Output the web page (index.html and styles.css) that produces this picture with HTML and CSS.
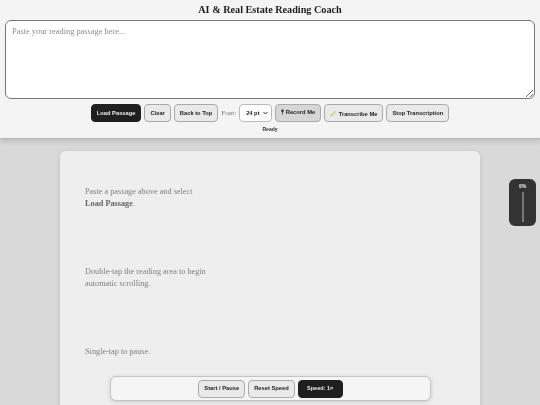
FILE: index.html
```html
<!DOCTYPE html>
<html lang="en">
<head>
<meta charset="utf-8">
<title>AI &amp; Real Estate Reading Coach</title>
<link rel="stylesheet" href="styles.css">
</head>
<body>
<header class="top">
  <h1 class="title">AI &amp; Real Estate Reading Coach</h1>
  <textarea class="passage" placeholder="Paste your reading passage here..."></textarea>
  <div class="toolbar">
    <button class="btn dark">Load Passage</button>
    <button class="btn">Clear</button>
    <button class="btn">Back to Top</button>
    <label class="font-label">Font:</label>
    <select class="font-select"><option>24 pt</option></select>
    <button class="btn pressed"><svg class="mic" viewBox="0 0 6 10" width="3" height="6"><path d="M1 0h4v4.500L3.600 6v4H2.400V6L1 4.500z" fill="#222"/></svg> Record Me</button>
    <button class="btn"><svg class="pencil" viewBox="0 0 10 10" width="7" height="7"><path d="M1 9l1-3 5-5 2 2-5 5z" fill="#e9cf8a"/><path d="M1 9l.5-1.500L2.500 8.500z" fill="#555"/></svg> Transcribe Me</button>
    <button class="btn">Stop Transcription</button>
  </div>
  <div class="status">Ready</div>
</header>
<main class="stage">
  <article class="card">
    <p class="line-a">Paste a passage above and select<br><strong>Load Passage</strong>.</p>
    <p class="line-b">Double-tap the reading area to begin<br>automatic scrolling.</p>
    <p class="line-c">Single-tap to pause.</p>
  </article>
</main>
<aside class="progress">
  <span class="pct">0%</span>
  <span class="track"></span>
</aside>
<nav class="controls">
  <button class="btn">Start / Pause</button>
  <button class="btn">Reset Speed</button>
  <button class="btn dark speed">Speed: 1×</button>
</nav>
</body>
</html>
```
FILE: styles.css
```css
* { box-sizing: border-box; }
html, body { margin: 0; height: 100%; overflow: hidden; }
body {
  background: #d9d9d9;
  font-family: "Liberation Sans", Arial, sans-serif;
  color: #222;
  filter: blur(.3px);
}
.top {
  height: 139px;
  background: #f4f4f4;
  border-bottom: 1px solid #b4b4b4;
  box-shadow: 0 2px 6px rgba(0,0,0,.15);
  padding: 3px 5px 0;
  display: flex;
  flex-direction: column;
  align-items: center;
}
.title {
  margin: 0;
  height: 17px;
  font: bold 10.200px/13px "Liberation Serif", serif;
  color: #1c1c1c;
}
.passage {
  display: block;
  width: 100%;
  height: 79px;
  flex: none;
  border: 1px solid #777;
  border-radius: 6px;
  background: #fff;
  padding: 5px 6px;
  font: 8.400px/11px "Liberation Serif", serif;
  resize: vertical;
}
.passage::placeholder { color: #8c8c8c; opacity: 1; }
.toolbar {
  display: flex;
  align-items: center;
  gap: 3px;
  margin-top: 5px;
  height: 18px;
}
.btn {
  height: 18px;
  padding: 1px 5px 0;
  border: 1px solid #aaa;
  border-radius: 4px;
  background: #e9e9e9;
  font: bold 5.750px/1 "Liberation Sans", Arial, sans-serif;
  color: #222;
  white-space: nowrap;
}
.btn.dark { background: #1f1f1f; border-color: #1f1f1f; color: #eee; }
.btn.pressed { background: #d6d6d6; padding: 0 5px 1px; }
.mic, .pencil { vertical-align: -1px; }
.font-label { font: 7px "Liberation Serif", serif; color: #777; }
.font-select {
  appearance: none;
  width: 33px;
  height: 18px;
  border: 1px solid #bbb;
  border-radius: 4px;
  background: #fff url("data:image/svg+xml,%3Csvg xmlns='http://www.w3.org/2000/svg' width='5' height='4'%3E%3Cpath d='M.5 1l2 2 2-2' fill='none' stroke='%23333'/%3E%3C/svg%3E") no-repeat right 3px center;
  font: bold 5.750px "Liberation Sans", Arial, sans-serif;
  color: #222;
  padding: 0 0 0 6px;
}
.status {
  margin-top: 3px;
  font: bold 5px/8px "Liberation Sans", Arial, sans-serif;
  color: #333;
}
.stage {
  display: flex;
  justify-content: center;
  padding-top: 12px;
}
.card {
  width: 420px;
  height: 300px;
  background: #eee;
  border-radius: 6px 6px 0 0;
  box-shadow: 0 1px 5px rgba(0,0,0,.12);
  padding: 35px 25px;
  font: 8.250px/11.500px "Liberation Serif", serif;
  color: #808080;
}
.card p { margin: 0; }
.card strong { color: #666; }
.line-b { padding-top: 57px; }
.line-c { padding-top: 57px; }
.progress {
  position: fixed;
  left: 509px;
  top: 179px;
  width: 27px;
  height: 47px;
  background: #333;
  border-radius: 6px;
  display: flex;
  flex-direction: column;
  align-items: center;
  padding-top: 4px;
  gap: 3px;
}
.pct { font: bold 5px/6px "Liberation Sans", Arial, sans-serif; color: #eee; }
.track { width: 2px; height: 30px; background: #777; }
.controls {
  position: fixed;
  left: 110px;
  top: 376px;
  width: 321px;
  height: 25px;
  background: #f5f5f5;
  border: 1px solid #c4c4c4;
  border-radius: 6px;
  box-shadow: 0 1px 4px rgba(0,0,0,.15);
  display: flex;
  justify-content: center;
  align-items: center;
  gap: 3px;
}
.speed { width: 45px; font-size: 5.500px; }
```
